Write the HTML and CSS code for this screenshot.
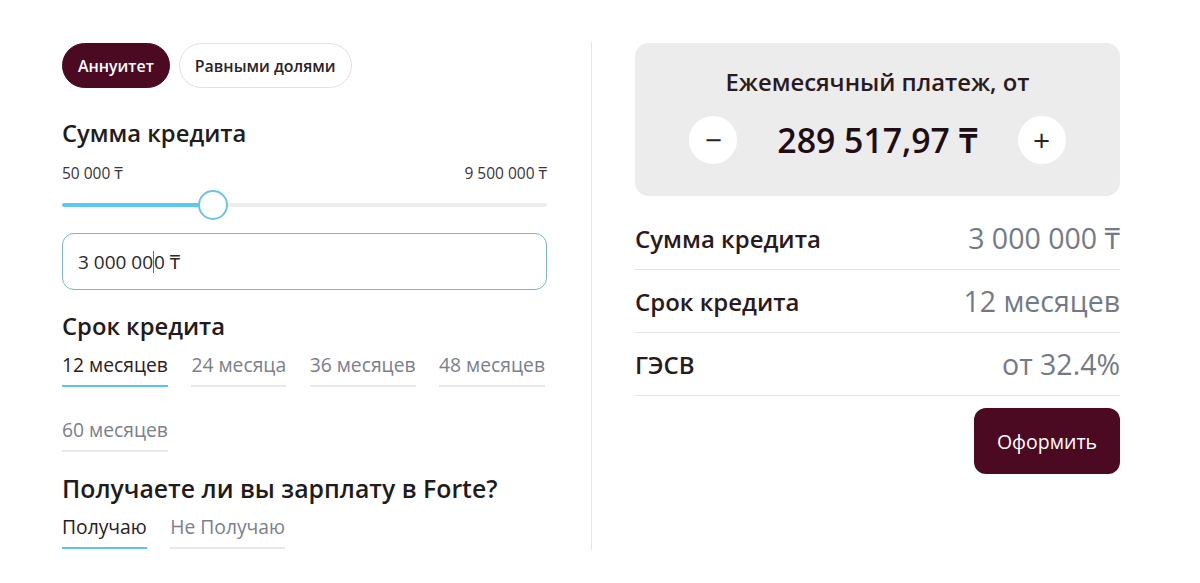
FILE: index.html
```html
<!DOCTYPE html>
<html lang="ru">
<head>
    <meta charset="UTF-8">
    <meta name="viewport" content="width=device-width, initial-scale=1.0">
    <title>Кредитный калькулятор</title>
    <link rel="stylesheet" href="styles.css">
</head>
<body>
    <div class="calculator">
        <div class="params">
            <div class="mode-tabs">
                <button class="mode-tab active">Аннуитет</button>
                <button class="mode-tab">Равными долями</button>
            </div>

            <div class="section-title amount-title">Сумма кредита</div>
            <div class="range-labels">
                <span>50 000 ₸</span>
                <span>9 500 000 ₸</span>
            </div>
            <div class="slider">
                <div class="slider-fill" style="width: 31.1%"></div>
                <div class="slider-thumb" style="left: 31.1%"></div>
            </div>
            <div class="amount-input">3 000 00<span class="caret"></span>0 ₸</div>

            <div class="section-title term-title">Срок кредита</div>
            <div class="options">
                <span class="option active">12 месяцев</span>
                <span class="option">24 месяца</span>
                <span class="option">36 месяцев</span>
                <span class="option">48 месяцев</span>
                <span class="option">60 месяцев</span>
            </div>

            <div class="section-title salary-title">Получаете ли вы зарплату в Forte?</div>
            <div class="options">
                <span class="option active">Получаю</span>
                <span class="option">Не Получаю</span>
            </div>
        </div>

        <div class="divider"></div>

        <div class="result">
            <div class="payment-card">
                <div class="payment-label">Ежемесячный платеж, от</div>
                <div class="payment-row">
                    <button class="round-btn">−</button>
                    <span class="payment-value">289 517,97 ₸</span>
                    <button class="round-btn">+</button>
                </div>
            </div>

            <div class="summary-row first">
                <span class="summary-name">Сумма кредита</span>
                <span class="summary-value">3 000 000 ₸</span>
            </div>
            <div class="summary-row">
                <span class="summary-name">Срок кредита</span>
                <span class="summary-value">12 месяцев</span>
            </div>
            <div class="summary-row">
                <span class="summary-name">ГЭСВ</span>
                <span class="summary-value">от 32.4%</span>
            </div>

            <div class="actions">
                <button class="apply-btn">Оформить</button>
            </div>
        </div>
    </div>
</body>
</html>
```

FILE: styles.css
```css
/* Base */
body {
    margin: 0;
    background-color: #ffffff;
    font-family: "Open Sans", "Noto Sans", sans-serif;
    color: #1f1a1c;
}

button {
    font-family: inherit;
    cursor: pointer;
}

.calculator {
    display: flex;
    padding: 42px 0 0 62px;
}

/* Left column */
.params {
    width: 485px;
    padding-top: 1px;
}

.mode-tabs {
    display: flex;
    gap: 9px;
}

.mode-tab {
    height: 45px;
    padding: 0 15px;
    border: 1px solid #e2e2e2;
    border-radius: 23px;
    background-color: #ffffff;
    color: #2a2426;
    font-size: 15.9px;
    font-weight: 600;
}

.mode-tab.active {
    background-color: #4b0a21;
    border-color: #4b0a21;
    color: #ffffff;
}

.section-title {
    font-size: 23.8px;
    font-weight: 600;
    line-height: 32px;
    color: #211b1d;
}

.amount-title {
    margin-top: 29px;
}

.range-labels {
    display: flex;
    justify-content: space-between;
    margin-top: 14px;
    font-size: 15.5px;
    line-height: 20px;
    color: #3b3537;
}

.slider {
    position: relative;
    height: 4px;
    margin-top: 20px;
    background-color: #eeeeee;
    border-radius: 2px;
}

.slider-fill {
    height: 100%;
    background-color: #5cc9f2;
    border-radius: 2px;
}

.slider-thumb {
    position: absolute;
    top: -13px;
    width: 26px;
    height: 26px;
    margin-left: -15px;
    border: 2px solid #6cc4e8;
    border-radius: 50%;
    background-color: #ffffff;
}

.amount-input {
    display: flex;
    align-items: center;
    height: 55px;
    margin-top: 26px;
    padding-left: 15px;
    border: 1px solid #7eb6c6;
    border-radius: 12px;
    font-size: 19px;
    color: #2c2729;
}

.caret {
    display: inline-block;
    width: 1px;
    height: 22px;
    background-color: #c2407a;
}

.term-title {
    margin-top: 20px;
}

/* Option tabs */
.options {
    display: flex;
    flex-wrap: wrap;
    column-gap: 23.5px;
    row-gap: 30px;
    margin-top: 10px;
}

.option {
    padding-bottom: 7px;
    border-bottom: 2px solid #e8e8e8;
    font-size: 19.3px;
    line-height: 26px;
    color: #7a808c;
}

.option.active {
    border-bottom-color: #5cc3ea;
    color: #2b1b22;
}

.salary-title {
    margin-top: 20px;
    font-size: 24.8px;
}

/* Divider */
.divider {
    width: 1px;
    height: 508px;
    margin: 0 43px 0 44px;
    background-color: #e6e6e6;
}

/* Right column */
.result {
    width: 485px;
    padding-top: 1px;
}

.payment-card {
    padding: 23px 0 32px;
    border-radius: 14px;
    background-color: #ececec;
    text-align: center;
}

.payment-label {
    font-size: 23.8px;
    font-weight: 600;
    line-height: 32px;
    color: #2a1a20;
}

.payment-row {
    display: flex;
    align-items: center;
    justify-content: center;
    gap: 40px;
    margin-top: 18px;
}

.round-btn {
    width: 48px;
    height: 48px;
    padding: 0;
    border: none;
    border-radius: 50%;
    background-color: #ffffff;
    color: #2a2426;
    font-size: 30px;
    line-height: 1;
}

.payment-value {
    font-size: 33.8px;
    font-weight: 600;
    color: #1f0d14;
}

.summary-row {
    display: flex;
    align-items: center;
    justify-content: space-between;
    height: 62px;
    border-bottom: 1px solid #e4e4e4;
}

.summary-row.first {
    margin-top: 11px;
}

.summary-name {
    font-size: 24px;
    font-weight: 600;
    color: #2a1a20;
}

.summary-value {
    font-size: 28.5px;
    color: #737a86;
}

.actions {
    display: flex;
    justify-content: flex-end;
    margin-top: 12px;
}

.apply-btn {
    width: 146px;
    height: 66px;
    border: none;
    border-radius: 12px;
    background-color: #4b0a21;
    color: #ffffff;
    font-size: 19.5px;
    font-weight: 500;
}
```
